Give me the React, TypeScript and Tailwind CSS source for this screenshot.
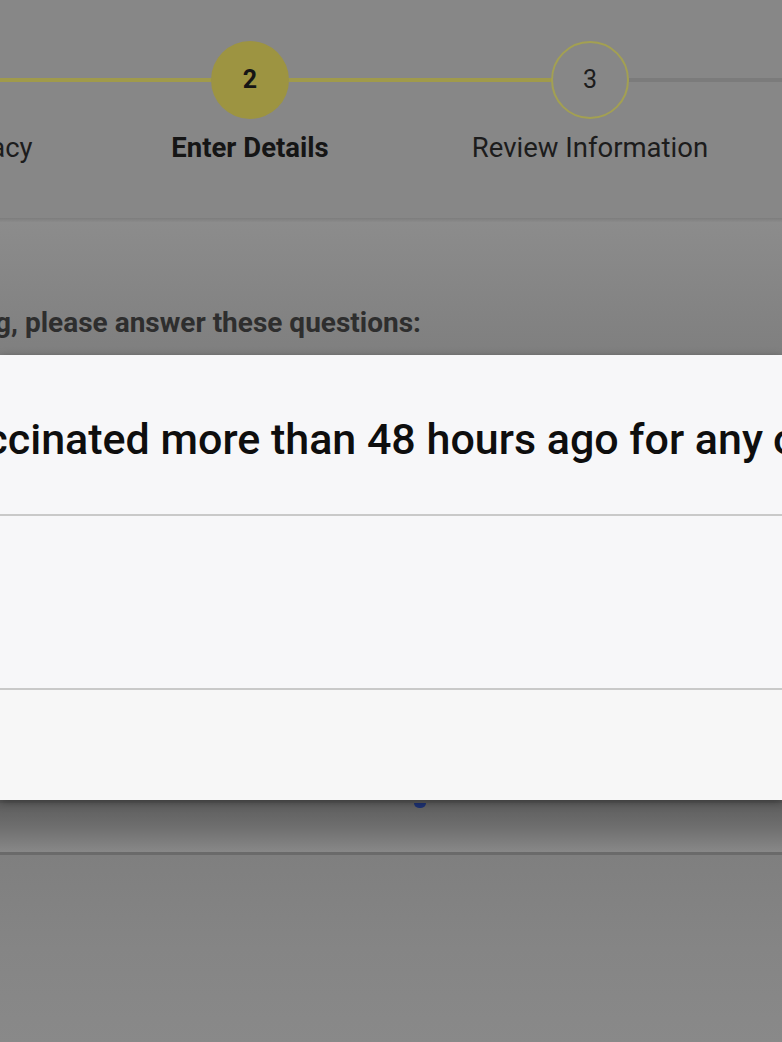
import React from "react";

type Step = { n: number; label: string; filled: boolean; active: boolean; leftOn: boolean; rightOn: boolean };

const steps: Step[] = [
  { n: 1, label: "Find Your Pharmacy", filled: true, active: false, leftOn: true, rightOn: true },
  { n: 2, label: "Enter Details", filled: true, active: true, leftOn: true, rightOn: true },
  { n: 3, label: "Review Information", filled: false, active: false, leftOn: true, rightOn: false },
  { n: 4, label: "Confirm", filled: false, active: false, leftOn: false, rightOn: false },
];

const StepItem = ({ step }: { step: Step }) => (
  <div className="flex w-[340px] shrink-0 flex-col items-center">
    <div className="flex w-full items-center">
      <div className={`h-[4px] flex-1 ${step.leftOn ? "bg-[#a09a4a]" : "bg-[#7b7b7b]"}`} />
      <div
        className={`flex h-[78px] w-[78px] items-center justify-center rounded-full text-[25px] ${
          step.filled
            ? "bg-[#9d9441] font-bold text-[#151515]"
            : "border-[2px] border-[#a3a052] text-[#1c1c1c]"
        }`}
      >
        {step.n}
      </div>
      <div className={`h-[4px] flex-1 ${step.rightOn ? "bg-[#a09a4a]" : "bg-[#7b7b7b]"}`} />
    </div>
    <p
      className={`mt-[13px] whitespace-nowrap text-[27.5px] leading-[32px] ${
        step.active ? "font-bold text-[#151515]" : "text-[#1c1c1c]"
      }`}
    >
      {step.label}
    </p>
  </div>
);

export default function App() {
  return (
    <div
      className="flex h-[1042px] w-full flex-col overflow-hidden bg-[#868686]"
      style={{ fontFamily: "Roboto, 'Liberation Sans', sans-serif" }}
    >
      {/* stepper */}
      <div className="h-[218px] shrink-0 bg-[#878787] pt-[41px]">
        <div className="ml-[-260px] flex">
          {steps.map((s) => (
            <StepItem key={s.n} step={s} />
          ))}
        </div>
      </div>
      <div className="h-[4px] shrink-0 bg-gradient-to-b from-[#7d7d7d] to-[#8a8a8a]" />

      {/* intro */}
      <div className="flex h-[133px] shrink-0 items-end bg-gradient-to-b from-[#8c8c8c] to-[#7f7f7f] pb-[16px]">
        <div className="flex w-[421px] justify-end">
          <p className="whitespace-nowrap text-[28px] font-bold leading-[32px] text-[#2e2e2e]">
            Before booking, please answer these questions:
          </p>
        </div>
      </div>

      {/* modal */}
      <div className="relative z-10 flex h-[445px] shrink-0 flex-col bg-[#f7f7f9] shadow-[0_2px_8px_rgba(0,0,0,0.35)]">
        <div className="flex h-[159px] items-center pt-[8px]">
          <div className="flex w-[763px] shrink-0 justify-end">
            <h2 className="whitespace-nowrap text-[43px] font-medium leading-[48px] text-[#0e0e0e]">
              Have you been vaccinated more than 48 hours ago for any
            </h2>
          </div>
          <span className="ml-[10px] whitespace-nowrap text-[43px] font-medium leading-[48px] text-[#0e0e0e]">
            other vaccines?
          </span>
        </div>
        <div className="h-[2px] bg-[#c9c9c9]" />
        <div className="h-[172px] bg-[#f7f7f9]" />
        <div className="h-[2px] bg-[#c9c9c9]" />
        <div className="flex-1 bg-[#f7f7f7]" />
      </div>

      {/* page beneath overlay */}
      <div className="relative h-[52px] shrink-0 border-t-[3px] border-[#575757] bg-gradient-to-b from-[#5d5d5d] via-[#6f6f6f] to-[#888888]">
        <div className="ml-[414px] h-[5px] w-[12px] rounded-b-full bg-[#1d3170]" />
      </div>
      <div className="h-[3px] shrink-0 bg-[#6a6a6a]" />
      <div className="flex-1 bg-gradient-to-b from-[#7f7f7f] via-[#858585] to-[#898989]" />
    </div>
  );
}
